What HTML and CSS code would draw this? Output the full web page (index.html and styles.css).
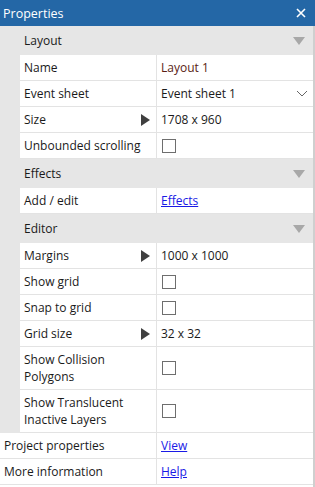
FILE: index.html
```html
<!DOCTYPE html>
<html lang="en">
<head>
  <meta charset="UTF-8">
  <meta name="viewport" content="width=device-width, initial-scale=1.0">
  <title>Properties</title>
  <link rel="stylesheet" href="styles.css">
</head>
<body>
  <div class="panel">
    <div class="titlebar">
      <span>Properties</span>
      <svg class="close" width="10" height="10" viewBox="0 0 10 10"><path d="M1 1L9 9M9 1L1 9" stroke="#fff" stroke-width="1.6"/></svg>
    </div>
    <div class="content">
      <div class="group">
        <div class="group-head">Layout <span class="collapse"></span></div>
        <div class="row"><div class="label">Name</div><div class="value name-value">Layout 1</div></div>
        <div class="row">
          <div class="label">Event sheet</div>
          <div class="value select">Event sheet 1
            <svg width="12" height="7" viewBox="0 0 12 7"><path d="M1 1L6 6L11 1" fill="none" stroke="#666" stroke-width="1"/></svg>
          </div>
        </div>
        <div class="row"><div class="label">Size <span class="expand"></span></div><div class="value">1708 x 960</div></div>
        <div class="row"><div class="label">Unbounded scrolling</div><div class="value"><span class="check"></span></div></div>
      </div>
      <div class="group">
        <div class="group-head">Effects <span class="collapse"></span></div>
        <div class="row"><div class="label">Add / edit</div><div class="value"><a href="#">Effects</a></div></div>
      </div>
      <div class="group">
        <div class="group-head">Editor <span class="collapse"></span></div>
        <div class="row"><div class="label">Margins <span class="expand"></span></div><div class="value">1000 x 1000</div></div>
        <div class="row"><div class="label">Show grid</div><div class="value"><span class="check"></span></div></div>
        <div class="row"><div class="label">Snap to grid</div><div class="value"><span class="check"></span></div></div>
        <div class="row"><div class="label">Grid size <span class="expand"></span></div><div class="value">32 x 32</div></div>
        <div class="row tall"><div class="label">Show Collision<br>Polygons</div><div class="value"><span class="check"></span></div></div>
        <div class="row tall"><div class="label">Show Translucent<br>Inactive Layers</div><div class="value"><span class="check"></span></div></div>
      </div>
      <div class="row top"><div class="label">Project properties</div><div class="value"><a href="#">View</a></div></div>
      <div class="row top"><div class="label">More information</div><div class="value"><a href="#">Help</a></div></div>
    </div>
  </div>
</body>
</html>
```

FILE: styles.css
```css
body { margin: 0; font-family: "Open Sans", "Noto Sans", sans-serif; font-size: 12px; color: #1a1a1a; background: #fff; }
.panel { width: 315px; height: 487px; display: flex; flex-direction: column; overflow: hidden; }
.titlebar {
  height: 26px; flex: none;
  background: #2467a6; color: #fff;
  display: flex; align-items: center; justify-content: space-between;
  padding: 0 9px 0 3px;
  font-size: 12.5px;
}
.close { display: block; }
.content { flex: 1; border-right: 2px solid #cfcfcf; }
.group { background: #e6e6e6; }
.group-head {
  height: 29px;
  display: flex; align-items: center; justify-content: space-between;
  padding: 0 8px 0 24px;
}
.collapse {
  width: 0; height: 0;
  border-left: 6px solid transparent;
  border-right: 6px solid transparent;
  border-top: 8px solid #a8a8a8;
}
.row {
  display: grid;
  grid-template-columns: 137px 1fr;
  min-height: 25px;
  margin-left: 20px;
  background: #fff;
  border-bottom: 1px solid #e3e3e3;
}
.row.tall { min-height: 42px; }
.row.top { margin-left: 0; grid-template-columns: 157px 1fr; }
.label {
  display: flex; align-items: center; justify-content: space-between;
  padding: 0 6px 0 4px;
  border-right: 1px solid #e3e3e3;
  line-height: 17px;
}
.expand {
  width: 0; height: 0;
  border-top: 6px solid transparent;
  border-bottom: 6px solid transparent;
  border-left: 9px solid #404040;
}
.value {
  display: flex; align-items: center;
  padding: 0 5px 0 4px;
}
.select { justify-content: space-between; }
.name-value { color: #5a1c14; }
.check {
  width: 14px; height: 14px;
  margin-left: 1px;
  box-sizing: border-box;
  border: 1px solid #6e6e6e;
  background: #fff;
}
a { color: #1a1ae6; }
```
